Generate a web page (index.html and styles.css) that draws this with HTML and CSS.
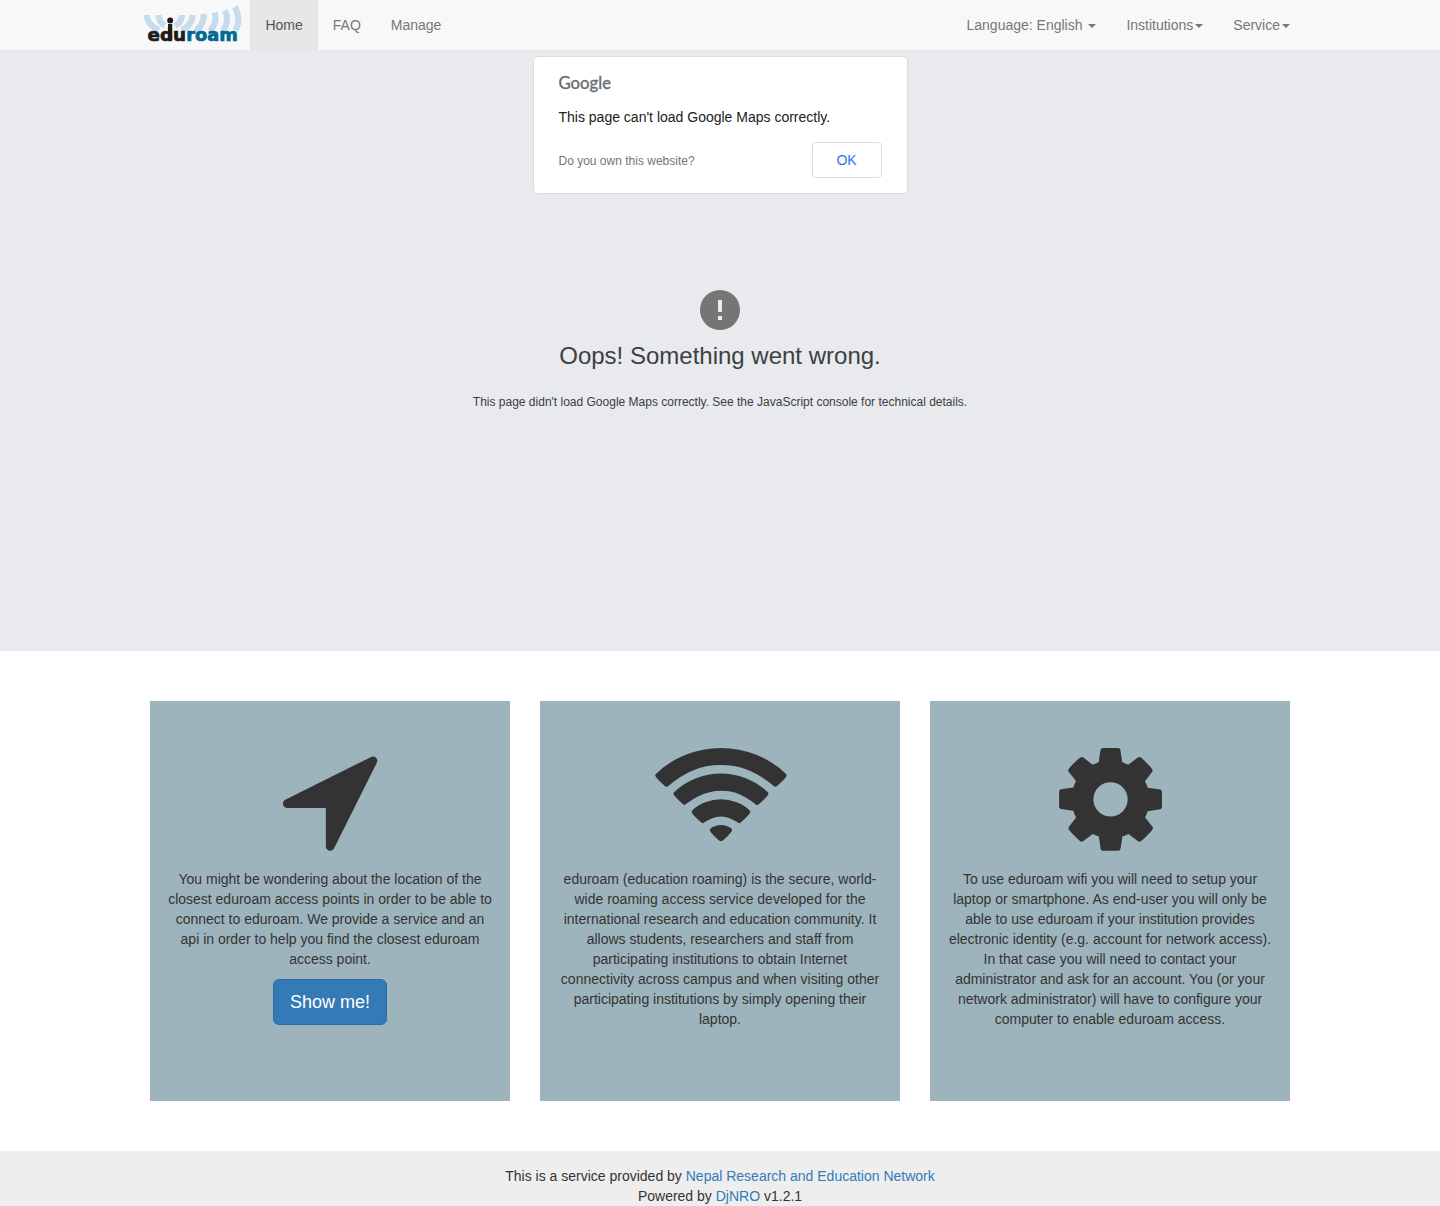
FILE: index.html
```html
<!DOCTYPE html>
<html lang="en">
<head>
<meta charset="utf-8">
<title>eduroam</title>
<link rel="stylesheet" href="styles.css">
</head>
<body>
<nav class="navbar">
  <div class="container">
    <a class="brand" href="#">
      <svg width="106" height="46" viewBox="0 0 106 46" role="img" aria-label="eduroam">
        <g class="waves">
          <path d="M6.500 15Q7.500 25 19 30"/>
          <path d="M18.500 15Q18.500 22 25 25.500"/>
          <path d="M42 15Q42 22 35 26"/>
          <path d="M52.500 15Q52.500 25 42 30"/>
          <path d="M63.500 14Q65 23 56 31"/>
          <path d="M74.500 12.500Q78 22 70 31"/>
          <path d="M85 10.500Q90 21 83 31"/>
          <path d="M95 7Q101.500 19 95.500 30.500"/>
        </g>
        <circle class="dot" cx="30.200" cy="20.500" r="3"/>
        <rect class="dot" x="28" y="24" width="4.200" height="16"/>
        <text class="word edu" x="7.500" y="40.700" textLength="38.500" lengthAdjust="spacingAndGlyphs">edu</text>
        <text class="word roam" x="46.200" y="40.700" textLength="51.500" lengthAdjust="spacingAndGlyphs">roam</text>
      </svg>
    </a>
    <ul class="nav">
      <li><a class="active" href="#">Home</a></li>
      <li><a href="#">FAQ</a></li>
      <li><a href="#">Manage</a></li>
    </ul>
    <ul class="nav nav-right">
      <li><a href="#">Language: English <b class="caret"></b></a></li>
      <li><a href="#">Institutions<b class="caret"></b></a></li>
      <li><a href="#">Service<b class="caret"></b></a></li>
    </ul>
  </div>
</nav>
<section class="map">
  <div class="dialog">
    <svg class="google" width="58" height="22" viewBox="0 0 58 22"><text x="-0.500" y="16.500" textLength="52.500" lengthAdjust="spacingAndGlyphs">Google</text></svg>
    <p>This page can't load Google Maps correctly.</p>
    <div class="dialog-row">
      <a href="#">Do you own this website?</a>
      <button type="button">OK</button>
    </div>
  </div>
  <div class="error">
    <svg width="40" height="40" viewBox="0 0 40 40"><path fill="#757575" fill-rule="evenodd" d="M20 0a20 20 0 1 0 0 40a20 20 0 0 0 0-40zM18 10h4v12h-4zM18 26h4v4h-4z"/></svg>
    <h1>Oops! Something went wrong.</h1>
    <p>This page didn't load Google Maps correctly. See the JavaScript console for technical details.</p>
  </div>
</section>
<main class="cards">
  <section class="card">
    <svg width="120" height="120" viewBox="-2 -5 1792 1792"><path d="M1593 349l-640 1280q-17 35-57 35-5 0-15-2-22-5-35.500-22.500t-13.500-39.500v-576h-576q-22 0-39.500-13.500t-22.500-35.500 4-42 29-30l1280-640q13-7 29-7 27 0 45 19 15 14 18.500 34.500t-6.500 39.500z"/></svg>
    <p>You might be wondering about the location of the closest eduroam access points in order to be able to connect to eduroam. We provide a service and an api in order to help you find the closest eduroam access point.</p>
    <a class="btn" href="#">Show me!</a>
  </section>
  <section class="card">
    <svg class="wifi" width="137.140" height="120" viewBox="-6 -5 2048 1792"><path d="M1024 1523q-20 0-93-73.500t-73-93.500q0-32 62.500-54t103.500-22 103.500 22 62.500 54q0 20-73 93.500t-93 73.500zm270-271q-2 0-40-25t-101.500-50-128.500-25-128.500 25-101 50-40.500 25q-18 0-93.500-75t-75.500-93q0-13 10-23 78-77 196-121t233-44 233 44 196 121q10 10 10 23 0 18-75.500 93t-93.500 75zm273-272q-11 0-23-8-136-105-252-154.500t-268-49.500q-85 0-170.500 22t-149 53-113.500 62-79 53-31 22q-17 0-92-75t-75-93q0-12 10-22 132-132 320-205t380-73 380 73 320 205q10 10 10 22 0 18-75 93t-92 75zm271-271q-11 0-22-9-179-157-371.500-236.500t-420.500-79.500-420.500 79.500-371.500 236.500q-11 9-22 9-17 0-92.500-75t-75.500-93q0-13 10-23 187-186 445-288t527-102 527 102 445 288q10 10 10 23 0 18-75.500 93t-92.500 75z"/></svg>
    <p>eduroam (education roaming) is the secure, world-wide roaming access service developed for the international research and education community. It allows students, researchers and staff from participating institutions to obtain Internet connectivity across campus and when visiting other participating institutions by simply opening their laptop.</p>
  </section>
  <section class="card">
    <svg width="120" height="120" viewBox="-8 -5 1792 1792"><path d="M1152 896q0-106-75-181t-181-75-181 75-75 181 75 181 181 75 181-75 75-181zm512-109v222q0 12-8 23t-20 13l-185 28q-19 54-39 91 35 50 107 138 10 12 10 25t-9 23q-27 37-99 108t-94 71q-12 0-26-9l-138-108q-44 23-91 38-16 136-29 186-7 28-36 28h-222q-14 0-24.500-8.500t-11.500-21.500l-28-184q-49-16-90-37l-141 107q-10 9-25 9-14 0-25-11-126-114-165-168-7-10-7-23 0-12 8-23 15-21 51-66.500t54-70.500q-27-50-41-99l-183-27q-13-2-21-12.500t-8-23.500v-222q0-12 8-23t19-13l186-28q14-46 39-92-40-57-107-138-10-12-10-24 0-10 9-23 26-36 98.500-107.500t94.500-71.500q13 0 26 10l138 107q44-23 91-38 16-136 29-186 7-28 36-28h222q14 0 24.500 8.500t11.500 21.500l28 184q49 16 90 37l142-107q9-9 24-9 13 0 25 10 129 119 165 170 7 8 7 22 0 12-8 23-15 21-51 66.500t-54 70.500q26 50 41 98l183 28q13 2 21 12.500t8 23.500z"/></svg>
    <p>To use eduroam wifi you will need to setup your laptop or smartphone. As end-user you will only be able to use eduroam if your institution provides electronic identity (e.g. account for network access). In that case you will need to contact your administrator and ask for an account. You (or your network administrator) will have to configure your computer to enable eduroam access.</p>
  </section>
</main>
<footer class="footer">
  <div>This is a service provided by <a href="#">Nepal Research and Education Network</a></div>
  <div>Powered by <a href="#">DjNRO</a> v1.2.1</div>
</footer>
</body>
</html>
```
FILE: styles.css
```css
* { box-sizing: border-box; }
body {
  margin: 0;
  font: 14px/20px "Liberation Sans", Arial, sans-serif;
  color: #333;
  background: #fff;
}
a { color: #337ab7; text-decoration: none; }
p { margin: 0; }
svg { display: block; }

.navbar { height: 51px; background: #f8f8f8; border-bottom: 1px solid #e7e7e7; }
.container { display: flex; width: 1170px; margin: 0 auto; padding: 0 0 0 5px; }
.brand { width: 110.450px; height: 50px; }
.waves { fill: none; stroke: #c6dbec; stroke-width: 6.200; }
.dot, .edu { fill: #1d1d1b; }
.edu { stroke: #1d1d1b; }
.roam { fill: #006892; stroke: #006892; }
.word { font: bold 17px "DejaVu Sans", sans-serif; stroke-width: .7px; }
.nav { display: flex; margin: 0; padding: 0; list-style: none; }
.nav a { display: block; padding: 15px; color: #777; }
.nav .active { background: #e7e7e7; color: #555; }
.nav-right { margin-left: auto; }
.caret {
  display: inline-block;
  margin-left: 2px;
  vertical-align: middle;
  border-top: 4px solid;
  border-right: 4px solid transparent;
  border-left: 4px solid transparent;
}

.map { height: 600px; padding-top: 5px; background: #e8eaed; }
.dialog {
  width: 375px;
  height: 138px;
  margin: 0 auto;
  padding: 15px 25px 0;
  background: #fff;
  border: 1px solid #dadce0;
  border-radius: 5px;
}
.google text { font: 17.500px Lato, sans-serif; fill: #6b6e73; stroke: #6b6e73; stroke-width: .4px; }
.dialog p { margin-top: 13px; color: #212121; }
.dialog-row { display: flex; justify-content: space-between; align-items: center; margin-top: 15px; }
.dialog-row a { padding-top: 2px; font-size: 12px; color: #757575; }
.dialog-row button {
  width: 70px;
  height: 36px;
  padding: 0;
  font: inherit;
  color: #2a75f3;
  background: #fff;
  border: 1px solid #dadce0;
  border-radius: 4px;
}
.error { display: flex; flex-direction: column; align-items: center; margin-top: 96px; color: #3c4043; }
.error h1 { margin: 12px 0 0; font-size: 24px; font-weight: 400; line-height: 28px; }
.error p { margin-top: 22px; font-size: 12px; }

.cards { display: grid; grid-template-columns: repeat(3, 360px); gap: 30px; width: 1140px; margin: 50px auto; }
.card {
  display: flex;
  flex-direction: column;
  align-items: center;
  height: 400px;
  padding: 38px 15px 0;
  text-align: center;
  background: #9eb4bc;
}
.card svg { flex: none; fill: #333; }
.card .wifi { margin-left: 1px; }
.card p { margin-top: 10px; }
.btn {
  margin-top: 10px;
  padding: 10px 16px;
  font-size: 18px;
  line-height: 24px;
  color: #fff;
  background: #337ab7;
  border: 1px solid #2e6da4;
  border-radius: 6px;
}
.footer { height: 55px; padding-top: 15px; text-align: center; background: #eee; overflow: hidden; }
```
